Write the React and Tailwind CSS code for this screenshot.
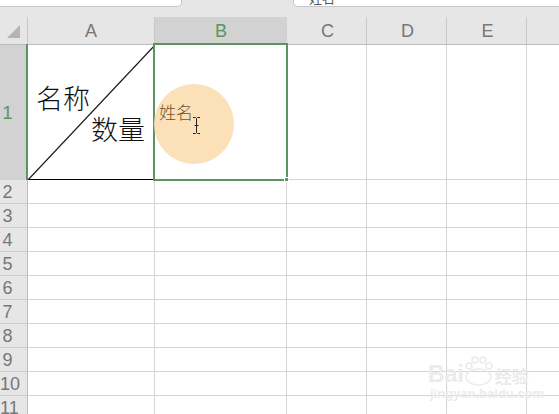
const FONT = '"Liberation Sans","Noto Sans CJK SC",sans-serif';
const CJK = '"Noto Sans CJK SC",sans-serif';
const cols = ['C', 'D', 'E'];
const rows = ['2', '3', '4', '5', '6', '7', '8', '9', '10', '11'];

function Row({ n }) {
  return (
    <div className="flex h-[24px] shrink-0">
      <div className="w-[28px] shrink-0 bg-[#e6e6e6] border-b border-b-[#cccccc] border-r border-r-[#bcbcbc] text-[#777777] text-[18px] leading-[24px] text-center pr-[12px] whitespace-nowrap">{n}</div>
      <div className="w-[127px] shrink-0 border-b border-r border-[#d4d4d4]" />
      <div className="w-[132px] shrink-0 border-b border-r border-[#d4d4d4]" />
      {cols.map((c) => (
        <div key={c} className="w-[80px] shrink-0 border-b border-r border-[#d4d4d4]" />
      ))}
      <div className="flex-1 border-b border-[#d4d4d4]" />
    </div>
  );
}

export default function App() {
  return (
    <div className="relative w-[559px] h-[414px] overflow-hidden bg-white" style={{ fontFamily: FONT }}>
      <div className="flex h-[17px] bg-[#e6e6e6]">
        <div className="w-[182px] h-[7px] bg-white border-b border-r border-[#c6c6c6] rounded-br-[5px]" />
        <div className="w-[111px] relative" />
        <div className="flex-1 h-[7px] bg-white border-b border-l border-[#c6c6c6] rounded-bl-[5px] overflow-hidden">
          <span className="block pl-[15px] -mt-[9px] text-[13px] leading-[14px] text-[#555555]" style={{ fontFamily: CJK }}>姓名</span>
        </div>
      </div>
      <div className="flex h-[28px] bg-[#e6e6e6] border-b border-[#bcbcbc]">
        <div className="w-[28px] shrink-0 flex items-end justify-end pr-[7px] pb-[6px] border-r border-[#c8c8c8]">
          <div className="w-[13px] h-[13px] bg-[#b4b4b4] [clip-path:polygon(100%_0,100%_100%,0_100%)]" />
        </div>
        <div className="w-[127px] shrink-0 border-r border-[#c8c8c8] text-center text-[18px] leading-[28px] text-[#777777]">A</div>
        <div className="w-[132px] shrink-0 bg-[#d2d2d2] text-center text-[18px] leading-[28px] text-[#5a9560]">B</div>
        {cols.map((c) => (
          <div key={c} className="w-[80px] shrink-0 pl-[2px] border-r border-[#c8c8c8] text-center text-[18px] leading-[28px] text-[#777777]">{c}</div>
        ))}
      </div>
      <div className="flex h-[135px] shrink-0">
        <div className="w-[28px] shrink-0 bg-[#d2d2d2] text-[#5a9560] text-[18px] leading-[136px] text-center pr-[13px]">1</div>
        <div className="relative w-[127px] shrink-0 border-b border-black">
          <svg className="absolute inset-0" width="127" height="135" viewBox="0 0 127 135">
            <line x1="0" y1="135" x2="127" y2="0" stroke="#1a1a1a" strokeWidth="1.2" />
          </svg>
          <span className="absolute left-[8px] top-[37px] text-[27px] leading-[32px] font-light text-[#111111] whitespace-nowrap" style={{ fontFamily: CJK }}>名称</span>
          <span className="absolute left-[63px] top-[68px] text-[27px] leading-[32px] font-light text-[#111111] whitespace-nowrap" style={{ fontFamily: CJK }}>数量</span>
        </div>
        <div className="w-[132px] shrink-0 border-b border-[#d4d4d4]" />
        {cols.map((c) => (
          <div key={c} className="w-[80px] shrink-0 border-b border-r border-[#d4d4d4]" />
        ))}
        <div className="flex-1 border-b border-[#d4d4d4]" />
      </div>
      {rows.map((n) => <Row key={n} n={n} />)}

      <div className="absolute left-[26px] top-[44px] w-[2px] h-[136px] bg-[#5a9560]" />
      <div className="absolute left-[153px] top-[43px] w-[135px] h-[138px] border-2 border-[#5a9560]" />
      <div className="absolute left-[284px] top-[177px] w-[5px] h-[5px] bg-[#5a9560] border border-white" />
      <div className="absolute left-[154px] top-[84px] w-[80px] h-[80px] rounded-full bg-[#fce0b8]" />
      <span className="absolute left-[159px] top-[102px] text-[17px] leading-[20px] font-light text-[#6e5230] whitespace-nowrap" style={{ fontFamily: CJK }}>姓名</span>
      <svg className="absolute left-[192px] top-[117px]" width="9" height="17" viewBox="0 0 9 17" fill="none" stroke="#222222" strokeWidth="1">
        <path d="M1 .5h2.5l1 1 1-1H8M4.5 1.5v14M1 16.5h2.5l1-1 1 1H8M2.5 8.5h4" />
      </svg>
      <div className="absolute left-[428px] top-[355px] text-[#ebebeb] pointer-events-none">
        <div className="flex items-end h-[31px]">
          <span className="text-[23px] leading-[24px] font-bold">Bai</span>
          <svg width="29" height="30" viewBox="0 0 29 30" fill="none" stroke="#ebebeb" strokeWidth="1.6">
            <ellipse cx="14.5" cy="21" rx="12.5" ry="8" />
            <circle cx="5" cy="10" r="3" /><circle cx="11" cy="4" r="3" /><circle cx="19" cy="4" r="3" /><circle cx="25" cy="10" r="3" />
          </svg>
          <span className="ml-[2px] text-[17px] leading-[21px] font-bold" style={{ fontFamily: CJK }}>经验</span>
        </div>
        <div className="text-[13px] leading-[16px] font-bold pl-[2px] whitespace-nowrap">jingyan.baidu.com</div>
      </div>
    </div>
  );
}
